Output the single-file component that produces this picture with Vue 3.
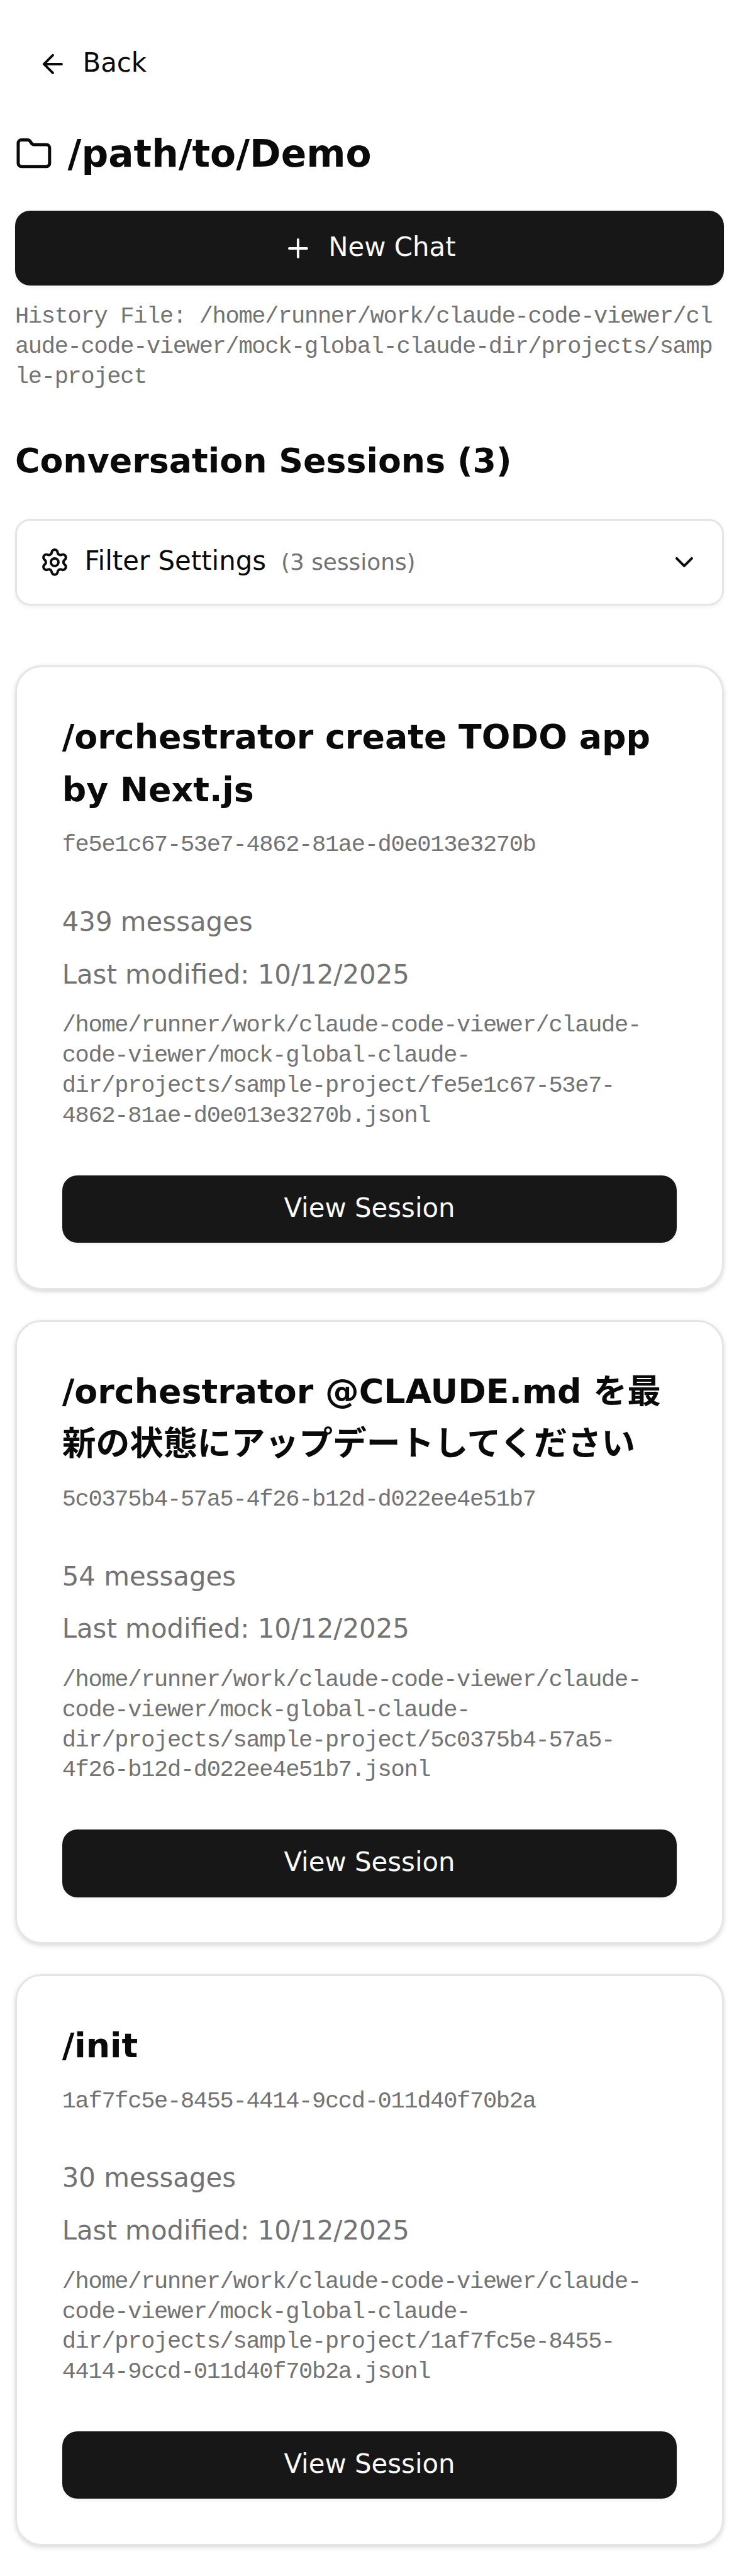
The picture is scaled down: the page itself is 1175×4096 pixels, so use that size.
<script setup>
const sessions = [
  { title: '/orchestrator create TODO app by Next.js', id: 'fe5e1c67-53e7-4862-81ae-d0e013e3270b', count: 439 },
  { title: '/orchestrator @CLAUDE.md を最新の状態にアップデートしてください', id: '5c0375b4-57a5-4f26-b12d-d022ee4e51b7', count: 54 },
  { title: '/init', id: '1af7fc5e-8455-4414-9ccd-011d40f70b2a', count: 30 },
]
const root = '/home/runner/work/claude-code-viewer/claude-code-viewer/mock-global-claude-dir/projects/sample-project'
</script>

<template>
  <div class="page">
    <header>
      <a class="back">
        <svg class="icon s16" viewBox="0 0 24 24"><path d="m12 19-7-7 7-7" /><path d="M19 12H5" /></svg>
        <span class="text">Back</span>
      </a>
      <div class="heading">
        <svg class="icon s20" viewBox="0 0 24 24"><path d="M20 20a2 2 0 0 0 2-2V8a2 2 0 0 0-2-2h-7.9a2 2 0 0 1-1.69-.9L9.6 3.9A2 2 0 0 0 7.93 3H4a2 2 0 0 0-2 2v13a2 2 0 0 0 2 2Z" /></svg>
        <h1>/path/to/Demo</h1>
      </div>
      <button class="btn new">
        <svg class="icon s16" viewBox="0 0 24 24"><path d="M5 12h14" /><path d="M12 5v14" /></svg>
        <span class="text">New Chat</span>
      </button>
      <p class="mono history">History File: {{ root }}</p>
    </header>
    <main>
      <h2>Conversation Sessions ({{ sessions.length }})</h2>
      <div class="filter">
        <svg class="icon s16" viewBox="0 0 24 24"><path d="M9.671 4.136a2.34 2.34 0 0 1 4.659 0 2.34 2.34 0 0 0 3.319 1.915 2.34 2.34 0 0 1 2.33 4.033 2.34 2.34 0 0 0 0 3.831 2.34 2.34 0 0 1-2.33 4.033 2.34 2.34 0 0 0-3.319 1.915 2.34 2.34 0 0 1-4.659 0 2.34 2.34 0 0 0-3.32-1.915 2.34 2.34 0 0 1-2.33-4.033 2.34 2.34 0 0 0 0-3.831A2.34 2.34 0 0 1 6.35 6.051a2.34 2.34 0 0 0 3.319-1.915" /><circle cx="12" cy="12" r="3" /></svg>
        <span class="label text">Filter Settings</span>
        <span class="count">({{ sessions.length }} sessions)</span>
        <svg class="icon s16 chevron" viewBox="0 0 24 24"><path d="m6 9 6 6 6-6" /></svg>
      </div>
      <div class="cards">
        <article v-for="s in sessions" :key="s.id" class="card">
          <h3>{{ s.title }}</h3>
          <p class="mono sid">{{ s.id }}</p>
          <p class="meta">{{ s.count }} messages</p>
          <p class="meta modified">Last modified: 10/12/2025</p>
          <p class="mono path">{{ root }}/{{ s.id }}.jsonl</p>
          <button class="btn view"><span class="text">View Session</span></button>
        </article>
      </div>
    </main>
  </div>
</template>

<style>
html { background: #fff; }
body { margin: 0; }
</style>

<style scoped>
.page {
  --u: calc(1175px / 393);
  box-sizing: border-box;
  width: 1175px;
  height: 4096px;
  overflow: hidden;
  padding: calc(16 * var(--u)) calc(8 * var(--u));
  font-family: "DejaVu Sans", "Noto Sans CJK JP", sans-serif;
  font-size: calc(14 * var(--u));
  line-height: calc(20 * var(--u));
  color: #0a0a0a;
}
h1, h2, h3, p { margin: 0; }
.icon {
  flex: none;
  fill: none;
  stroke: currentColor;
  stroke-width: 2;
  stroke-linecap: round;
  stroke-linejoin: round;
}
.s16 { width: calc(16 * var(--u)); height: calc(16 * var(--u)); }
.s20 { width: calc(20 * var(--u)); height: calc(20 * var(--u)); }
.text { padding-bottom: 4px; }
.back {
  display: flex;
  align-items: center;
  gap: calc(8 * var(--u));
  height: calc(36 * var(--u));
  padding-left: calc(12 * var(--u));
  margin-bottom: calc(16 * var(--u));
}
.heading {
  display: flex;
  align-items: center;
  gap: calc(8 * var(--u));
  margin-bottom: calc(16 * var(--u));
}
h1 {
  font-size: calc(20 * var(--u));
  line-height: calc(28 * var(--u));
}
.btn {
  display: flex;
  align-items: center;
  justify-content: center;
  gap: calc(8 * var(--u));
  width: 100%;
  border: 0;
  padding: 0;
  font: inherit;
  color: #fafafa;
  background: #171717;
  border-radius: calc(8 * var(--u));
  box-shadow: 0 calc(1 * var(--u)) calc(2 * var(--u)) rgba(0, 0, 0, 0.05);
}
.new { height: calc(40 * var(--u)); }
.view { height: calc(36 * var(--u)); }
.mono {
  font-family: "Liberation Mono", monospace;
  font-size: 37px;
  letter-spacing: -1.29px;
  line-height: calc(16 * var(--u));
  color: #737373;
}
.history {
  margin-top: calc(8 * var(--u) + 2px);
  word-break: break-all;
}
h2 {
  margin-top: calc(24 * var(--u) - 5px);
  font-size: calc(18 * var(--u));
  line-height: calc(28 * var(--u));
}
.filter {
  display: flex;
  align-items: center;
  box-sizing: border-box;
  height: calc(46 * var(--u));
  margin-top: calc(16 * var(--u) + 3px);
  padding: 0 calc(12 * var(--u));
  border: 3px solid #e5e5e5;
  border-radius: calc(8 * var(--u));
  box-shadow: 0 calc(1 * var(--u)) calc(2 * var(--u)) rgba(0, 0, 0, 0.05);
}
.label { margin-left: calc(8 * var(--u)); }
.count {
  margin-left: calc(8 * var(--u));
  font-size: calc(12 * var(--u));
  color: #737373;
}
.chevron { margin-left: auto; }
.cards {
  display: flex;
  flex-direction: column;
  gap: calc(16 * var(--u));
  margin-top: calc(32 * var(--u));
}
.card {
  padding: calc(24 * var(--u) - 3px) calc(24 * var(--u)) calc(24 * var(--u));
  border: 3px solid #e5e5e5;
  border-radius: calc(14 * var(--u));
  box-shadow: 0 calc(1 * var(--u)) calc(3 * var(--u)) rgba(0, 0, 0, 0.1), 0 calc(1 * var(--u)) calc(2 * var(--u)) calc(-1 * var(--u)) rgba(0, 0, 0, 0.1);
}
h3 {
  font-size: calc(18 * var(--u));
  line-height: calc(28 * var(--u));
  word-break: break-word;
}
.sid { margin-top: calc(6 * var(--u) + 5px); }
.meta { margin-top: calc(24 * var(--u) - 4px); color: #737373; }
.modified { margin-top: calc(8 * var(--u)); }
.path { margin-top: calc(8 * var(--u) + 4px); }
.view { margin-top: calc(24 * var(--u) - 2px); }
</style>
